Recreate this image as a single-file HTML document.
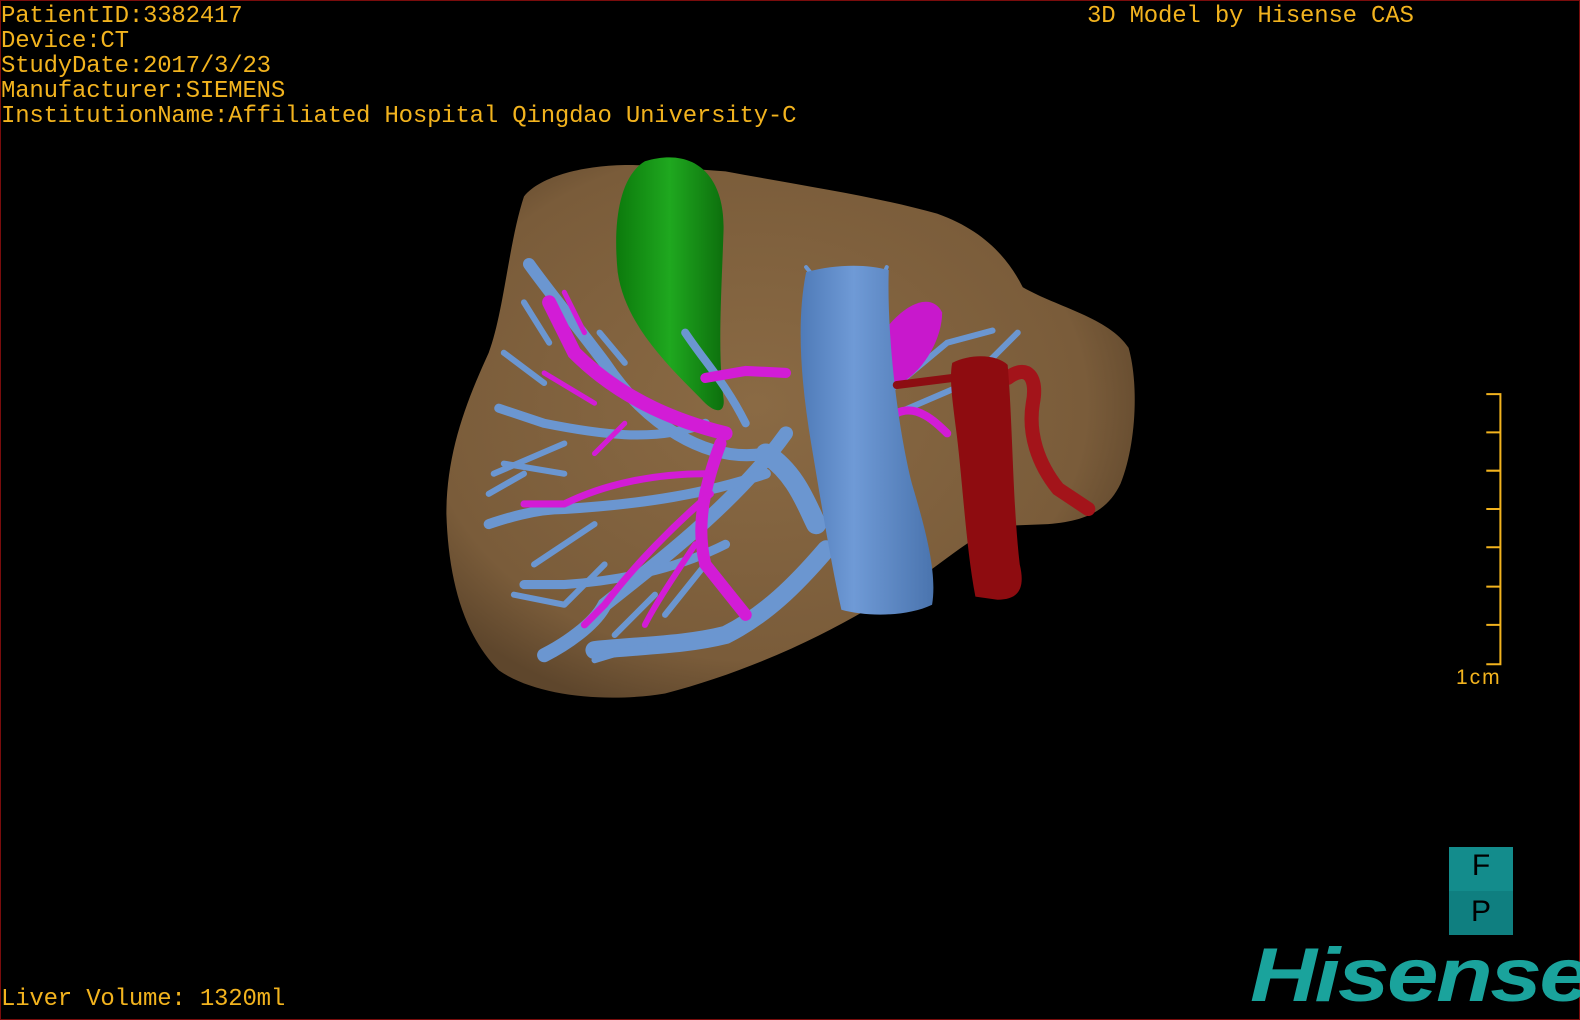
<!DOCTYPE html>
<html><head><meta charset="utf-8"><style>
html,body{margin:0;padding:0;background:#000;width:1580px;height:1020px;overflow:hidden}
#f{position:absolute;left:0;top:0;width:1578px;height:1018px;border:1px solid #7a0c0c}
svg{position:absolute;left:0;top:0}
.t{position:absolute;color:#f2b31e;font-family:"Liberation Mono",monospace;font-size:24px;line-height:25px;white-space:pre;letter-spacing:-0.2px}
</style></head><body>
<svg width="1580" height="1020" viewBox="0 0 1568 1012" preserveAspectRatio="none">
<defs>
<radialGradient id="lv" cx="0.45" cy="0.45" r="0.6"><stop offset="0" stop-color="#8a6a44"/><stop offset="0.8" stop-color="#7a5c3a"/><stop offset="1" stop-color="#5e462c"/></radialGradient>
<linearGradient id="ivc" x1="0" x2="1"><stop offset="0" stop-color="#4f7bb8"/><stop offset="0.4" stop-color="#6f9ad6"/><stop offset="1" stop-color="#4a74ae"/></linearGradient>
<linearGradient id="gr" x1="0" x2="1"><stop offset="0" stop-color="#0c7a0c"/><stop offset="0.5" stop-color="#1fa81f"/><stop offset="1" stop-color="#0d6f0d"/></linearGradient>
</defs>
<path d="M520,195 C540,170 600,160 650,165 L720,170 C800,185 870,195 930,212 C975,228 1000,255 1015,285 C1050,305 1100,315 1120,345 C1130,380 1128,440 1112,480 C1100,505 1080,517 1040,520 L990,522 C950,540 920,575 860,605 C800,640 730,670 660,688 C600,698 530,690 495,665 C460,630 445,575 443,510 C443,450 462,400 485,350 C500,310 505,240 520,195 Z" fill="url(#lv)"/>
<path d="M640,160 C690,145 720,175 718,230 C716,290 712,350 718,395 C720,410 710,412 695,395 C660,360 620,320 613,270 C608,220 615,175 640,160Z" fill="url(#gr)"/>
<g stroke="#6b96d0" stroke-linecap="round" fill="none">
<path d="M760,450 C700,460 640,420 600,360 C570,320 545,290 525,262" stroke-width="12"/>
<path d="M780,430 C730,500 650,560 600,600 C590,620 560,640 540,650" stroke-width="14"/>
<path d="M820,545 C790,580 760,610 720,630 C680,640 640,640 590,645" stroke-width="18"/>
<path d="M760,470 C700,490 640,500 560,505 C530,505 500,515 485,520" stroke-width="10"/>
<path d="M700,420 C650,440 590,430 540,420 L495,405" stroke-width="9"/>
<path d="M740,420 C720,380 700,360 680,330" stroke-width="8"/>
<path d="M720,540 C680,560 630,575 560,580 L520,580" stroke-width="9"/>
<path d="M560,470 L500,460 M590,520 L530,560 M600,560 L560,600 M650,590 L610,630 M545,340 L520,300 M540,380 L500,350 M560,440 L490,470 M700,560 L660,610 M520,470 L485,490 M560,600 L510,590 M640,640 L590,655 M620,360 L595,330" stroke-width="6"/>
<path d="M880,390 L940,340 L985,328 M890,410 L960,380 L1010,330" stroke-width="6"/>
<path d="M800,265 L820,290 M880,265 L870,290" stroke-width="4"/>
<path d="M760,450 C790,470 800,500 810,520" stroke-width="20"/>
</g>
<g stroke="#d21cd6" stroke-linecap="round" fill="none">
<path d="M720,430 C680,420 620,400 570,350 L545,300" stroke-width="14"/>
<path d="M715,440 C700,480 690,520 700,560 L740,610" stroke-width="12"/>
<path d="M700,470 C650,470 600,480 560,500 L520,500" stroke-width="7"/>
<path d="M705,490 C670,520 630,560 600,600 L580,620" stroke-width="7"/>
<path d="M690,540 C670,570 650,600 640,620" stroke-width="6"/>
<path d="M780,370 L740,368 L700,375" stroke-width="10"/>
<path d="M590,400 L540,370 M620,420 L590,450 M580,330 L560,290" stroke-width="5"/>
<path d="M890,410 C910,400 930,420 940,430" stroke-width="8"/>
</g>
<path d="M880,325 C900,300 925,290 935,310 C935,340 910,380 880,385 C870,370 870,345 880,325Z" fill="#c818cc"/>
<path d="M800,270 C830,262 860,262 882,268 C880,330 890,420 905,480 C920,530 930,570 925,600 C900,612 860,612 835,605 C825,560 815,500 805,440 C795,380 790,320 800,270Z" fill="url(#ivc)"/>
<path d="M1000,375 C1020,360 1030,375 1025,400 C1020,430 1030,460 1050,485 L1080,505" stroke="#a3141a" stroke-width="14" fill="none" stroke-linecap="round"/>
<path d="M890,382 L945,375" stroke="#8c0e12" stroke-width="8" stroke-linecap="round"/>
<path d="M945,360 C965,350 990,352 1000,362 C1005,420 1005,500 1012,560 C1018,585 1010,595 990,595 L968,592 C958,540 955,470 948,420 C945,395 942,375 945,360Z" fill="#8e0c10"/>
<g stroke="#f2b31e" stroke-width="2" fill="none">
<path d="M1475,391 H1489 V659 H1475 M1475,429 H1489 M1475,467 H1489 M1475,505 H1489 M1475,543 H1489 M1475,582 H1489 M1475,620 H1489"/>
</g>
</svg>
<div id="f"></div>
<div class="t" style="left:1px;top:4px">PatientID:3382417
Device:CT
StudyDate:2017/3/23
Manufacturer:SIEMENS
InstitutionName:Affiliated Hospital Qingdao University-C</div>
<div class="t" style="left:1087px;top:4px">3D Model by Hisense CAS</div>
<div class="t" style="left:1px;top:987px">Liver Volume: 1320ml</div>
<div class="t" style="left:1456px;top:665px;font-family:'Liberation Sans',sans-serif;font-size:21px;letter-spacing:2px">1cm</div>
<div style="position:absolute;left:1449px;top:847px;width:64px;height:88px;background:#138c8c">
<div style="position:absolute;left:0;top:44px;width:64px;height:44px;background:#0f7f80"></div>
<div style="position:absolute;left:0;top:2px;width:64px;text-align:center;font:30px 'Liberation Sans',sans-serif;color:#000">F</div>
<div style="position:absolute;left:0;top:48px;width:64px;text-align:center;font:30px 'Liberation Sans',sans-serif;color:#000">P</div>
</div>
<div style="position:absolute;left:1250px;top:938px;font:italic bold 76px 'Liberation Sans',sans-serif;color:#1aa39c;letter-spacing:-2px;line-height:76px;transform:scaleX(1.22);transform-origin:0 0">Hisense</div>
</body></html>
